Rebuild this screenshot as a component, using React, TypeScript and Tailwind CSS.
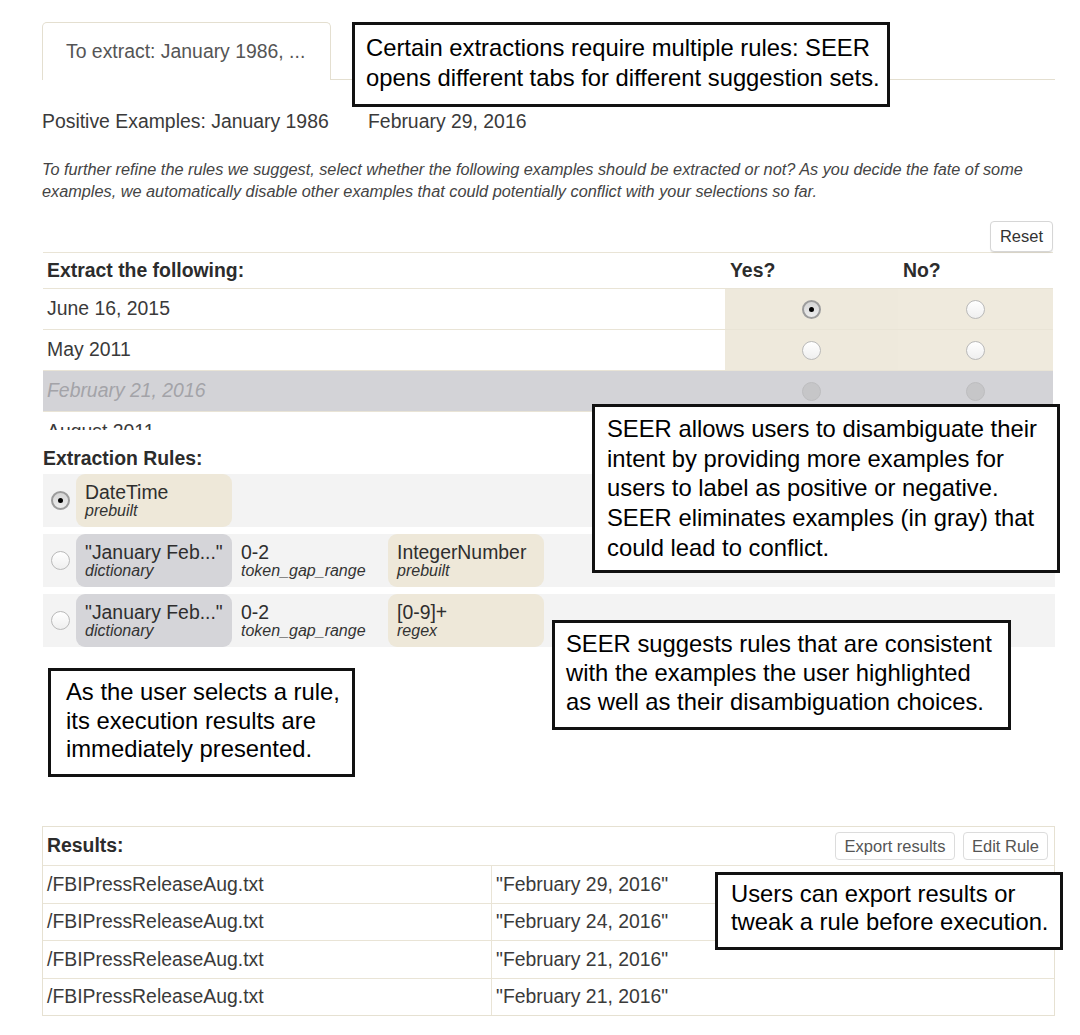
import React from "react";

function Radio({ checked, disabled }: { checked?: boolean; disabled?: boolean }) {
  if (disabled)
    return <span className="block h-[19px] w-[19px] rounded-full border border-[#bdbdbf] bg-[#c6c6c8]" />;
  if (checked)
    return (
      <span className="flex h-[19px] w-[19px] items-center justify-center rounded-full border-[2px] border-[#9c9c9c] bg-linear-to-b from-[#d6d6d6] to-[#ececec]">
        <span className="h-[5px] w-[5px] rounded-full bg-black" />
      </span>
    );
  return <span className="block h-[19px] w-[19px] rounded-full border border-[#b9b9b9] bg-linear-to-b from-white to-[#efefef]" />;
}

function Chip({ title, sub, tone }: { title: string; sub: string; tone: "beige" | "gray" | "none" }) {
  const bg = tone === "beige" ? "bg-[#eee8d9]" : tone === "gray" ? "bg-[#d5d5d9]" : "";
  return (
    <div className={`flex h-full w-[156px] flex-col justify-center rounded-[9px] pl-[9px] ${bg}`}>
      <div className="whitespace-nowrap text-[19.4px] leading-[19px] text-[#2e2e2e]">{title}</div>
      <div className="whitespace-nowrap text-[16px] leading-[17px] italic text-[#333]">{sub}</div>
    </div>
  );
}

function ExRow({ text, gray, yes }: { text: string; gray?: boolean; yes?: boolean }) {
  if (gray)
    return (
      <div className="grid h-[41px] grid-cols-[682px_173px_155px] border-b border-[#e9e4d6] bg-[#d3d3d7]">
        <div className="flex items-center pl-[4px] text-[19.4px] italic text-[#a3a3a8]">{text}</div>
        <div className="flex items-center justify-center">
          <Radio disabled />
        </div>
        <div className="flex items-center justify-center">
          <Radio disabled />
        </div>
      </div>
    );
  return (
    <div className="grid h-[41px] grid-cols-[682px_173px_155px] border-b border-[#e9e4d6]">
      <div className="flex items-center pl-[4px] text-[19.4px]">{text}</div>
      <div className="flex items-center justify-center bg-[#eee9dc]">
        <Radio checked={yes} />
      </div>
      <div className="flex items-center justify-center bg-[#efeadd]">
        <Radio />
      </div>
    </div>
  );
}

function Callout({ className, children }: { className: string; children: React.ReactNode }) {
  return (
    <div
      className={`absolute whitespace-nowrap border-[3px] border-[#111] bg-white text-[23.8px] text-black ${className}`}
    >
      {children}
    </div>
  );
}

const results = [
  '"February 29, 2016"',
  '"February 24, 2016"',
  '"February 21, 2016"',
  '"February 21, 2016"',
];

export default function App() {
  return (
    <div className="relative h-[1035px] w-[1080px] overflow-hidden bg-white font-['Liberation_Sans',Arial,Helvetica,sans-serif] text-[#3a3a3a]">
      <div className="w-[1055px] pl-[42px] pt-[22px]">
        {/* Tabs */}
        <div className="flex h-[58px]">
          <div className="flex w-[289px] items-center rounded-t-[5px] border border-b-0 border-[#e4dfd0] pl-[23px] text-[19.4px] text-[#555]">
            To extract: January 1986, ...
          </div>
          <div className="flex-1 border-b border-[#e4dfd0]" />
        </div>

        {/* Positive examples */}
        <div className="mt-[29px] flex text-[19.4px] leading-[24px]">
          <span className="w-[326px]">Positive Examples: January 1986</span>
          <span>February 29, 2016</span>
        </div>

        <p className="mt-[25px] whitespace-nowrap text-[16.3px] italic leading-[22px] text-[#444]">
          To further refine the rules we suggest, select whether the following examples should be extracted or not? As you decide the fate of some
          <br />
          examples, we automatically disable other examples that could potentially conflict with your selections so far.
        </p>

        <div className="mt-[19px] flex justify-end pr-[2px]">
          <button className="h-[31px] w-[63px] rounded-[4px] border border-[#d6d6d6] bg-white text-[16.5px] text-[#333] shadow-[0_1px_1px_rgba(0,0,0,0.08)]">
            Reset
          </button>
        </div>

        {/* Extract table */}
        <div className="ml-[1px] h-[178px] w-[1010px] overflow-hidden">
          <div className="grid h-[37px] grid-cols-[682px_173px_155px] border-y border-[#e9e4d6] text-[19.4px] font-bold text-[#2c2c2c]">
            <div className="flex items-center pl-[4px]">Extract the following:</div>
            <div className="flex items-center pl-[5px]">Yes?</div>
            <div className="flex items-center pl-[5px]">No?</div>
          </div>
          <ExRow text="June 16, 2015" yes />
          <ExRow text="May 2011" />
          <ExRow text="February 21, 2016" gray />
          <ExRow text="August 2011" />
        </div>

        {/* Extraction rules */}
        <div className="ml-[1px] mt-[16px] text-[19.4px] font-bold leading-[24px] text-[#2c2c2c]">Extraction Rules:</div>
        <div className="ml-[1px] mt-[4px] flex flex-col gap-[7px]">
          <div className="flex h-[53px] items-center bg-[#f3f3f3] pl-[8px]">
            <Radio checked />
            <div className="ml-[6px] flex h-full">
              <Chip title="DateTime" sub="prebuilt" tone="beige" />
            </div>
          </div>
          <div className="flex h-[53px] items-center bg-[#f3f3f3] pl-[8px]">
            <Radio />
            <div className="ml-[6px] flex h-full">
              <Chip title={'"January Feb..."'} sub="dictionary" tone="gray" />
              <Chip title="0-2" sub="token_gap_range" tone="none" />
              <Chip title="IntegerNumber" sub="prebuilt" tone="beige" />
            </div>
          </div>
          <div className="flex h-[53px] items-center bg-[#f3f3f3] pl-[8px]">
            <Radio />
            <div className="ml-[6px] flex h-full">
              <Chip title={'"January Feb..."'} sub="dictionary" tone="gray" />
              <Chip title="0-2" sub="token_gap_range" tone="none" />
              <Chip title="[0-9]+" sub="regex" tone="beige" />
            </div>
          </div>
        </div>

        {/* Results */}
        <div className="mt-[179px] w-[1013px] border border-[#e6e1d2]">
          <div className="flex h-[38px] items-center justify-between pl-[4px] pr-[6px]">
            <span className="text-[19.4px] font-bold text-[#2c2c2c]">Results:</span>
            <div className="flex gap-[8px]">
              <button className="h-[28px] w-[120px] rounded-[4px] border border-[#dcdcdc] bg-white text-[16.5px] text-[#555]">
                Export results
              </button>
              <button className="h-[28px] w-[85px] rounded-[4px] border border-[#dcdcdc] bg-white text-[16.5px] text-[#555]">
                Edit Rule
              </button>
            </div>
          </div>
          {results.map((r, i) => (
            <div key={i} className="grid h-[37.5px] grid-cols-[449px_1fr] border-t border-[#e9e4d6] text-[19.4px]">
              <div className="flex items-center border-r border-[#e9e4d6] pl-[4px]">/FBIPressReleaseAug.txt</div>
              <div className="flex items-center pl-[4px]">{r}</div>
            </div>
          ))}
        </div>
      </div>

      {/* Annotations */}
      <Callout className="left-[352px] top-[22px] h-[85px] w-[538px] pl-[11px] pt-[8px] leading-[29.5px]">
        Certain extractions require multiple rules: SEER
        <br />
        opens different tabs for different suggestion sets.
      </Callout>
      <Callout className="left-[592px] top-[404px] h-[169px] w-[468px] pl-[12px] pt-[7px] leading-[29.7px]">
        SEER allows users to disambiguate their
        <br />
        intent by providing more examples for
        <br />
        users to label as positive or negative.
        <br />
        SEER eliminates examples (in gray) that
        <br />
        could lead to conflict.
      </Callout>
      <Callout className="left-[552px] top-[620px] h-[110px] w-[459px] pl-[11px] pt-[6px] leading-[29px]">
        SEER suggests rules that are consistent
        <br />
        with the examples the user highlighted
        <br />
        as well as their disambiguation choices.
      </Callout>
      <Callout className="left-[48px] top-[668px] h-[109px] w-[307px] pl-[15px] pt-[7px] leading-[28.5px]">
        As the user selects a rule,
        <br />
        its execution results are
        <br />
        immediately presented.
      </Callout>
      <Callout className="left-[715px] top-[872px] h-[78px] w-[348px] pl-[13px] pt-[5px] leading-[28px]">
        Users can export results or
        <br />
        tweak a rule before execution.
      </Callout>
    </div>
  );
}
